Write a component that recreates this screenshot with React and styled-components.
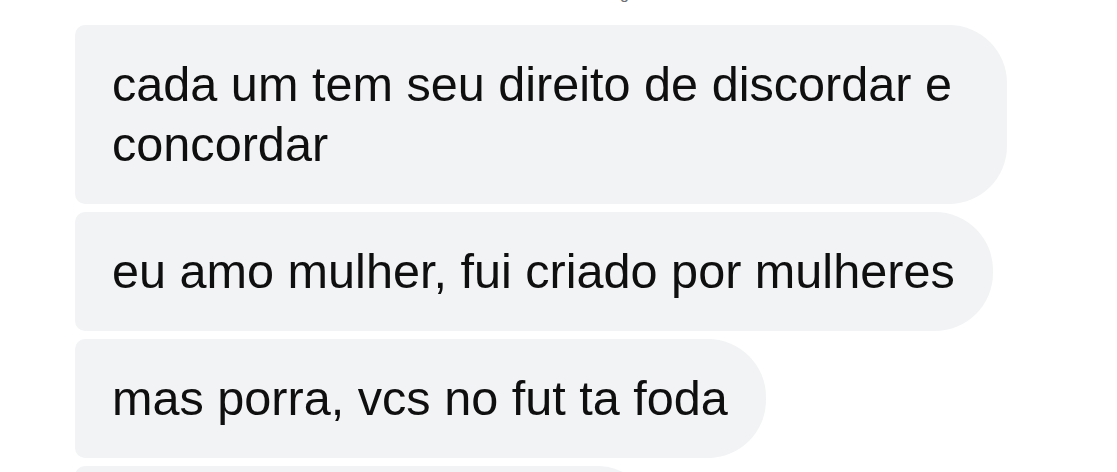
import React from 'react';
import styled, { createGlobalStyle } from 'styled-components';

const GlobalStyle = createGlobalStyle`
  html, body {
    margin: 0;
    padding: 0;
    background: #ffffff;
  }
  body {
    font-family: "Liberation Sans", Arial, sans-serif;
    overflow: hidden;
  }
`;

const messages = [
  { id: 1, text: 'cada um tem seu direito de discordar e concordar' },
  { id: 2, text: 'eu amo mulher, fui criado por mulheres' },
  { id: 3, text: 'mas porra, vcs no fut ta foda' },
  { id: 4, text: 'a gente vai treinar mais' },
];

const App = () => {
  return (
    <>
      <GlobalStyle />
      <Thread>
        <Header>
          <Stamp>g</Stamp>
        </Header>
        <List>
          {messages.map((m) => (
            <Bubble key={m.id}>{m.text}</Bubble>
          ))}
        </List>
      </Thread>
    </>
  );
};
export default App;

const Thread = styled.div`
  width: 1117px;
  height: 472px;
  overflow: hidden;
  background: #fff;
`;

const Header = styled.div`
  height: 25px;
  overflow: hidden;
  display: flex;
  padding-left: 620px;
`;

const Stamp = styled.span`
  margin-top: -14px;
  font-size: 16px;
  line-height: 16px;
  color: #6e6e73;
`;

const List = styled.div`
  display: flex;
  flex-direction: column;
  align-items: flex-start;
  gap: 8px;
  padding-left: 75px;
`;

const Bubble = styled.div`
  box-sizing: border-box;
  max-width: 932px;
  padding: 29px 38px 30px 37px;
  background: #f2f3f5;
  border-radius: 10px 58px 58px 10px;
  color: #0f0f10;
  font-size: 48.6px;
  line-height: 60px;
`;
